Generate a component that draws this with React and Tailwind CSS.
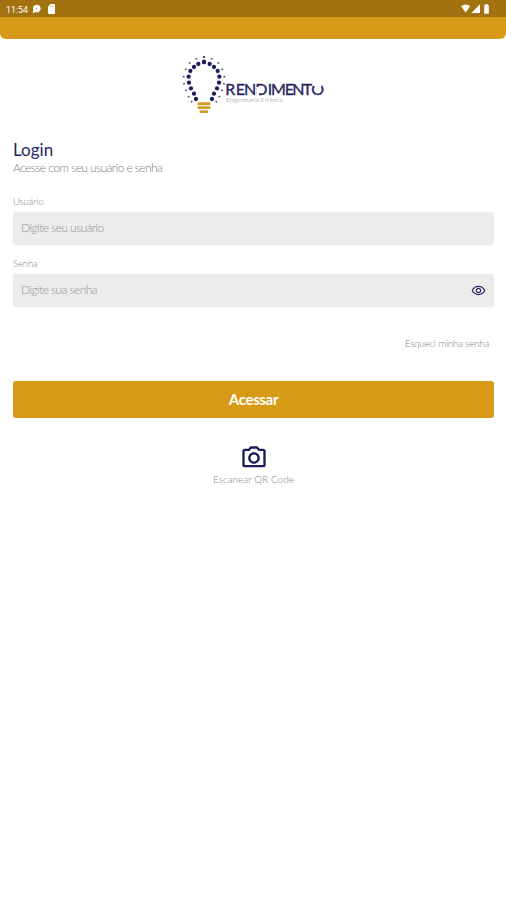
import { MdOutlineRemoveRedEye, MdOutlinePhotoCamera } from "react-icons/md";

const innerDots = [
  [0, 36], [17, 42], [30, 51], [41, 63], [46, 80], [45, 98], [39, 115], [30, 131], [24, 147],
];

const outerDots = [
  [0, 21], [23, 26], [43, 39], [55, 58], [61, 80], [60, 101], [54, 121], [46, 140], [37, 155],
];

function StatusBar() {
  return (
    <div className="flex h-[17px] items-center justify-between bg-[#a1720f] pl-[6px] pr-[16px] text-white">
      <div className="flex items-center">
        <svg width="22" height="12" viewBox="0 0 22 12" className="overflow-visible">
          <text x="0" y="9.5" fontSize="9.5" textLength="22" lengthAdjust="spacingAndGlyphs" fill="#fff" fontFamily="Roboto, sans-serif" fontWeight="400">
            11:54
          </text>
        </svg>
        <svg className="ml-[4px]" width="9" height="10" viewBox="0 0 9 10" fill="currentColor">
          <path d="M4.8.7a3.8 3.8 0 1 1-1.1 7.4L.6 9.3l.8-3A3.8 3.8 0 0 1 4.8.7Z" />
          <circle cx="4.6" cy="4.5" r=".6" fill="#a1720f" />
        </svg>
        <svg className="ml-[7px]" width="7" height="10" viewBox="0 0 7 10" fill="currentColor">
          <path d="M2.5 0H6a1 1 0 0 1 1 1v8a1 1 0 0 1-1 1H1a1 1 0 0 1-1-1V2.7Z" />
          <path d="M2.6 1.7v1.2M4 1.7v1.2M5.4 1.7v1.2" stroke="#a1720f" strokeWidth=".5" />
        </svg>
      </div>
      <svg width="30" height="10" viewBox="0 0 30 10" fill="currentColor">
        <path d="M1 2.1Q5.6-1.2 10.2 2.1L5.6 8.6Z" />
        <path d="M20 .2V9h-8.6Z" />
        <path d="M24.2 1h1.2V0h2.2v1h1.2v8.8h-4.6Z" />
      </svg>
    </div>
  );
}

function Logo() {
  return (
    <svg width="155" height="70" viewBox="0 0 465 210" className="overflow-visible" role="img" aria-label="Rendimento">
      <g fill="#1c1c5e">
        {[-1, 1].map((side) =>
          innerDots.map(([x, y]) => (
            <circle key={`${side}-${y}`} cx={84 + side * x} cy={y} r="6.4" />
          ))
        )}
        {[-1, 1].map((side) =>
          outerDots.map(([x, y]) => (
            <circle key={`${side}-${y}`} cx={84 + side * x} cy={y} r="2.9" opacity=".75" />
          ))
        )}
      </g>
      <g fill="#d49a2c">
        <rect x="65" y="157" width="38" height="9" rx="1" />
        <rect x="65" y="169" width="38" height="8" rx="1" />
        <rect x="71" y="181" width="25" height="8" rx="1" />
      </g>
      <text
        x="148 179 204 238 275 285 326 349 380 406"
        y="135"
        fontSize="48"
        fill="#25255f"
        stroke="#25255f"
        strokeWidth="1"
        fontFamily="Lato, sans-serif"
        fontWeight="400"
      >
        RENDIMENTO
      </text>
      {/* gaps cut into the D and the O */}
      <path d="M241 111h8v26h-8zM411 94v12l17 12 9-9 1-15z" fill="#fff" />
      <text
        x="150"
        y="157"
        fontSize="18"
        textLength="170"
        lengthAdjust="spacingAndGlyphs"
        fill="#77778c"
        fontFamily="Lato, sans-serif"
        fontWeight="300"
      >
        Engenharia Elétrica
      </text>
    </svg>
  );
}

function Field({ label, placeholder, type = "text", children }) {
  return (
    <label className="block">
      <span className="block h-[17px] text-[9.5px] leading-[13px] tracking-[-0.1px] text-[#858592]">{label}</span>
      <div className="flex h-[33px] items-center rounded-[4px] bg-[#edebec] px-2 shadow-[0_0_1px_#dddddd]">
        <input
          type={type}
          placeholder={placeholder}
          className="min-w-0 flex-1 bg-transparent pb-[2px] text-[12px] tracking-[-0.58px] outline-none placeholder:text-[#969498]"
        />
        {children}
      </div>
    </label>
  );
}

export default function App() {
  return (
    <div className="min-h-[900px] w-full bg-white font-[Lato,sans-serif] font-light">
      <header className="overflow-hidden rounded-b-[6px] bg-[#d79a16]">
        <StatusBar />
        <div className="h-[22px]" />
      </header>

      <main className="pl-[13px] pr-3">
        <div className="mt-[11px] flex h-[70px] justify-center">
          <Logo />
        </div>

        <h1 className="mt-[20px] text-[17px] font-normal leading-[20px] text-[#24245f]">Login</h1>
        <p className="text-[12px] leading-[15px] tracking-[-0.57px] text-[#7c7c88]">Acesse com seu usuário e senha</p>

        <form className="mt-[20px]" onSubmit={(e) => e.preventDefault()}>
          <Field label="Usuário" placeholder="Digite seu usuário" />
          <div className="h-[12px]" />
          <Field label="Senha" placeholder="Digite sua senha" type="password">
            <MdOutlineRemoveRedEye size={15} color="#2b2b68" />
          </Field>

          <div className="mt-[29px] flex justify-end pr-[5px]">
            <a href="#" className="text-[10px] leading-[14px] tracking-[-0.3px] text-[#82828f]">Esqueci minha senha</a>
          </div>

          <button
            type="submit"
            className="mt-[31px] h-[37px] w-full rounded-[3px] bg-[#d79a16] text-[15px] font-bold tracking-[-0.35px] text-white"
          >
            Acessar
          </button>
        </form>

        <button type="button" className="mx-auto mt-[26px] flex flex-col items-center">
          <MdOutlinePhotoCamera size={28} color="#1c1c5e" />
          <span className="mt-[1px] text-[10px] leading-[12px] text-[#82828f]">Escanear QR Code</span>
        </button>
      </main>
    </div>
  );
}
